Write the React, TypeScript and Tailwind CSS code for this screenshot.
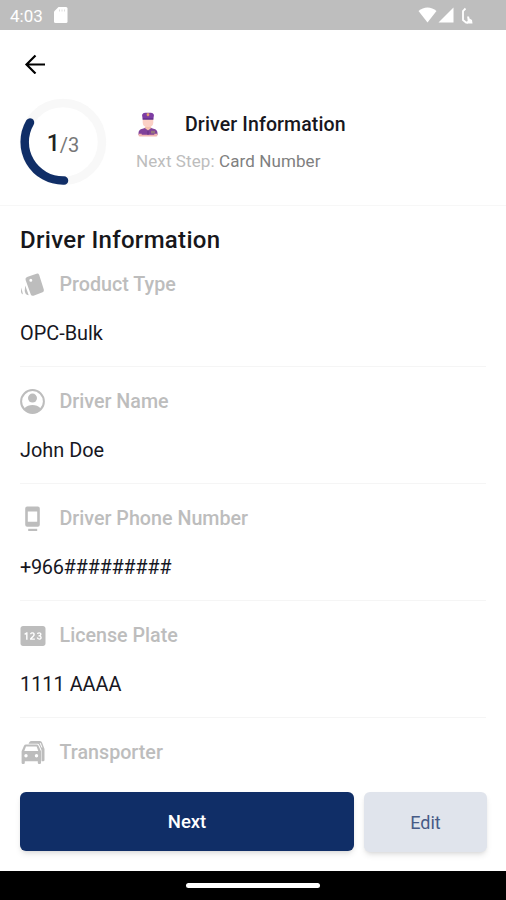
import type { ReactNode } from 'react'
import { MdPin } from 'react-icons/md'

interface Field {
    label: string
    value?: string
    icon: ReactNode
}

function CardsIcon() {
    return (
        <svg viewBox="0 0 26 26" className="size-[26px]" fill="currentColor">
            <path
                fillRule="evenodd"
                d="M7 5 16.500 1.700q2-.6 2.700 1.200l4.600 14.500q.6 2-1.200 2.800L13.500 23.700q-2 .6-2.700-1.200L5.600 8q-.6-2.200 1.400-3ZM10.800 6.800a1.500 1.500 0 1 0 0 3 1.500 1.500 0 0 0 0-3Z"
            />
            <path d="M5.200 13.500 8.700 23.300Q6.500 23.300 5.500 21.500L4.700 19ZM1.300 15.500 3 22.500Q.8 21.500 1 19.500Z" />
        </svg>
    )
}

function PersonIcon() {
    return (
        <svg viewBox="0 0 26 26" className="size-[26px]" fill="currentColor">
            <circle cx="12.5" cy="12.5" r="11.4" fill="none" stroke="currentColor" strokeWidth="2" />
            <circle cx="12.5" cy="9.1" r="4.5" />
            <path d="M3.8 20.1C6.500 16.800 9.500 16.100 12.500 16.100s6 .7 8.700 4C18.500 23 15.500 24 12.500 24s-6-1-8.700-3.900Z" />
        </svg>
    )
}

function PhoneIcon() {
    return (
        <svg viewBox="0 0 26 26" className="size-[26px]" fill="currentColor">
            <path
                fillRule="evenodd"
                d="M7.2 .5h10.600a2 2 0 0 1 2 2v16.200a2 2 0 0 1-2 2H7.200a2 2 0 0 1-2-2V2.500a2 2 0 0 1 2-2ZM7.800 5.500v10.200h9.400V5.500Z"
            />
            <rect x="8.200" y="22.800" width="9" height="2.200" />
        </svg>
    )
}

function CarsIcon() {
    return (
        <svg viewBox="0 0 26 26" className="size-[26px]" fill="currentColor">
            <path
                fillRule="evenodd"
                d="M8.500 3.700 9.500 2Q10 1 11.500 1H20q1.500 0 2 1.500L24.500 9v11q0 1.300-1.300 1.300H21.500V10l-2.300-5Q18.700 3.700 17.500 3.700ZM19.600 3 21.500 7.500h1L20.600 3Z"
            />
            <path
                fillRule="evenodd"
                d="M6 4.500h10.500q1.500 0 2 1.300l2.500 5.500v11.500q0 1.200-1.200 1.200h-.8q-1.200 0-1.200-1.200v-1.600H4.800v1.600q0 1.200-1.200 1.200h-.800q-1.200 0-1.200-1.200v-11.500L4 5.800q.5-1.300 2-1.300ZM6 6.500 4.300 11h14L16.600 6.500ZM6 14a1.700 1.700 0 1 0 0 3.400A1.700 1.700 0 0 0 6 14Zm10.500 0a1.700 1.700 0 1 0 0 3.400 1.700 1.700 0 0 0 0-3.400Z"
            />
        </svg>
    )
}

function DriverAvatar() {
    return (
        <svg viewBox="0 0 20 26" className="h-[26px] w-5">
            <path d="M.5 23v-2Q.5 17.500 4.500 16.700L10 15l5.500 1.700q4 .8 4 4.300v2Z" fill="#80419a" />
            <path d="M.5 21.800h3.200v2.700H2q-1.500 0-1.500-1.500Zm15.800 0h3.200V23q0 1.500-1.500 1.500h-1.700ZM3.700 22.800h12.600v1.700H3.700Z" fill="#efb5b0" />
            <path d="m6.500 15.800 1.300-1.800h4.400l1.300 1.800L10 18.500Z" fill="#f4c1ad" />
            <path d="M4.700 7h10.600v3.500q0 4.500-5.300 4.500t-5.300-4.500Z" fill="#fbd0c5" />
            <path d="M4 2.800Q5 .8 7 .7h6q2 .1 3 2.100L15.300 7.500H4.700Z" fill="#7d3da3" />
            <path d="m8.700 1.700 1.300-.7 1.300.7v1.500L10 4.500 8.700 3.200Z" fill="#e9a56d" />
            <path d="M4.700 6.500h10.600v1H4.700Z" fill="#572a80" />
            <path d="M13 18.800h4v2.700h-4Z" fill="#96757c" />
            <path d="M10 18.500V23" stroke="#5d2e80" strokeWidth=".8" />
        </svg>
    )
}

const fields: Field[] = [
    { label: 'Product Type', value: 'OPC-Bulk', icon: <CardsIcon /> },
    { label: 'Driver Name', value: 'John Doe', icon: <PersonIcon /> },
    { label: 'Driver Phone Number', value: '+966#########', icon: <PhoneIcon /> },
    { label: 'License Plate', value: '1111 AAAA', icon: <MdPin className="size-[30px]" /> },
    { label: 'Transporter', icon: <CarsIcon /> },
]

function StatusBar() {
    return (
        <div className="flex h-[30px] shrink-0 items-center bg-[#bebebe] text-white">
            <span className="ml-[10px] mt-[1px] w-[34px] text-[17px] leading-5">4:03</span>
            <svg viewBox="0 0 14 16" className="ml-[10px] h-4 w-[14px]" fill="currentColor">
                <path d="M4.500 0H12q1.500 0 1.500 1.500v13Q13.500 16 12 16H1.500Q0 16 0 14.500V4.500Z" />
                <path d="M5.500 2.500v2M8 2.500v2M10.500 2.500v2" stroke="#dedede" />
            </svg>
            <svg viewBox="0 0 56 18" className="ml-auto mr-[32px] h-[18px] w-14" fill="currentColor">
                <path d="M0.500 5Q4.500 1.500 9.500 1.500T18.500 5L9.500 16.500Z" />
                <path d="M20.500 16.500 35.500 1.500v15Z" />
                <path d="M47.500 2.500 45 5v9l3 2.500h2" fill="none" stroke="currentColor" strokeWidth="1.800" />
                <path d="M48.500 17.500H54.500l-.5-3.500-2.500-1.500-.500-2h-1.900l.6 4Z" />
            </svg>
        </div>
    )
}

function StepProgress() {
    return (
        <div className="relative size-[88px]">
            <svg viewBox="0 0 88 88" className="size-[88px]" fill="none" strokeWidth="8.500">
                <circle cx="44" cy="44" r="39" stroke="#f8f8f8" />
                <path d="M11 24.500A38.500 38.500 0 0 0 45 82.500" stroke="#102e67" strokeLinecap="round" />
            </svg>
            <div className="absolute inset-0 flex items-center justify-center pt-[5px] text-[20px] text-[#777]">
                <span className="text-[23px] font-medium text-[#222]">1</span>/3
            </div>
        </div>
    )
}

export default function App() {
    return (
        <div className="flex h-[900px] w-[506px] flex-col overflow-hidden bg-white font-['Roboto',sans-serif]">
            <StatusBar />

            <header className="h-[176px] shrink-0 border-b border-[#f7f7f7]">
                <button aria-label="Back" className="ml-[24px] mt-[24px] block">
                    <svg viewBox="0 0 22 20" className="h-5 w-[22px]" fill="none" stroke="#000" strokeWidth="2.200">
                        <path d="M21 10.500H3M11.500 1.500l-9 9 9 9" />
                    </svg>
                </button>
                <div className="ml-[19px] mt-[24px] flex">
                    <StepProgress />
                    <div className="ml-[29px] pt-[14px]">
                        <div className="flex h-[26px] items-center">
                            <div className="ml-[2px] w-[47px]">
                                <DriverAvatar />
                            </div>
                            <h1 className="text-[19.500px] font-medium leading-6 tracking-[0.13px] text-[#171720]">
                                Driver Information
                            </h1>
                        </div>
                        <p className="mt-[13px] text-[17px] leading-5 tracking-[0.1px] text-[#bdbdbd]">
                            Next Step: <span className="text-[#808080]">Card Number</span>
                        </p>
                    </div>
                </div>
            </header>

            <main className="min-h-0 flex-1 overflow-hidden px-5 pt-[18px]">
                <h2 className="text-[24px] font-medium leading-8 tracking-[0.3px] text-[#17171b]">Driver Information</h2>
                <div className="pt-[14px]">
                    {fields.map((field) => (
                        <section key={field.label} className="mb-[20px] h-[97px] border-b border-[#f5f5f5] pt-[2px]">
                            <div className="flex h-[26px] items-center text-[#bdbdbd]">
                                <div className="flex w-[39.500px] shrink-0">
                                    <div className="flex w-[25px] justify-center">
                                        <div className="shrink-0">{field.icon}</div>
                                    </div>
                                </div>
                                <h3 className="text-[19.700px] font-medium leading-6">{field.label}</h3>
                            </div>
                            <p
                                className={
                                    field.value?.startsWith('+')
                                        ? 'mt-[24px] text-[19.900px] leading-6 tracking-[-0.3px] text-[#17171f]'
                                        : 'mt-[24px] text-[19.900px] leading-6 text-[#17171f]'
                                }
                            >
                                {field.value}
                            </p>
                        </section>
                    ))}
                </div>
            </main>

            <footer className="flex h-[79px] shrink-0 gap-[10px] bg-white pl-5 pr-[19px]">
                <button className="h-[59px] w-[334px] rounded-md bg-[#102e67] pt-[2px] text-[18.500px] font-medium text-white shadow-md">
                    Next
                </button>
                <button className="h-[60px] flex-1 rounded-md bg-[#e0e4ec] text-[18px] text-[#475b86] shadow-md">
                    Edit
                </button>
            </footer>

            <div className="flex h-[29px] shrink-0 items-center justify-center bg-black">
                <div className="h-[5px] w-[134px] rounded-full bg-white" />
            </div>
        </div>
    )
}
